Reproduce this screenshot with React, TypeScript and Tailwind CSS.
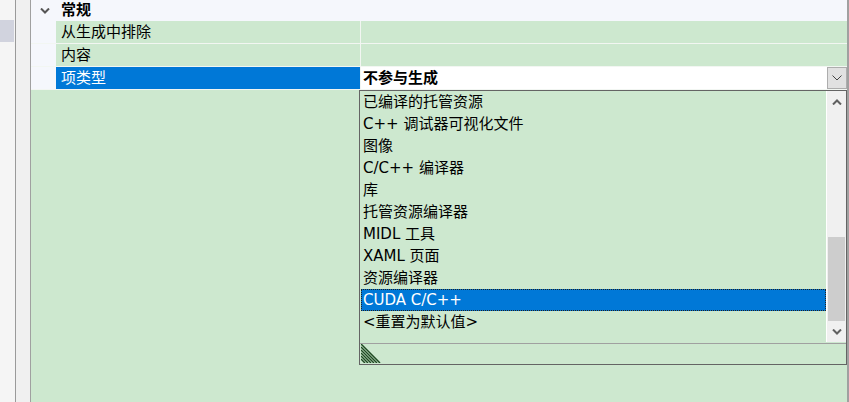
import React from "react";

const font = { fontFamily: '"Microsoft YaHei UI", "DejaVu Sans", "Noto Sans CJK SC", sans-serif' };

const items = [
  "已编译的托管资源",
  "C++ 调试器可视化文件",
  "图像",
  "C/C++ 编译器",
  "库",
  "托管资源编译器",
  "MIDL 工具",
  "XAML 页面",
  "资源编译器",
  "CUDA C/C++",
  "<重置为默认值>",
];

const Chevron = ({ up = false, className = "" }: { up?: boolean; className?: string }) => (
  <svg width="10" height="6" viewBox="0 0 10 6" className={className}>
    <path
      d={up ? "M1 5.5 L5 1.5 L9 5.5" : "M1 0.5 L5 4.5 L9 0.5"}
      fill="none"
      stroke="currentColor"
      strokeWidth="2"
    />
  </svg>
);

const Grip = () => (
  <svg width="20" height="19" viewBox="0 0 20 19">
    {[0, 3, 6, 9, 12, 15].map((k) => (
      <line key={k} x1="0" y1={k} x2={19 - k} y2="19" stroke="#1f4a22" strokeWidth="1.5" />
    ))}
  </svg>
);

const Row = ({ label, selected = false, children }: { label: string; selected?: boolean; children?: React.ReactNode }) => (
  <div className="flex h-[23px] border-b border-[#f2f6f2]">
    <div className="w-[25px] bg-[#f5f7fc]" />
    <div
      className={`w-[304px] pl-[5px] leading-[22px] text-[15px] ${selected ? "bg-[#0078d7] text-white" : "bg-[#cde8cf] text-black"}`}
    >
      {label}
    </div>
    <div className="w-px bg-[#f2f6f2]" />
    <div className="flex-1 bg-[#cde8cf]">{children}</div>
  </div>
);

export default function App() {
  return (
    <div className="flex h-[402px] w-[849px] overflow-hidden bg-white relative" style={font}>
      <div className="w-[15px] bg-[#f5f5f5] flex flex-col">
        <div className="h-[20px]" />
        <div className="h-[22px] w-[14px] bg-[#d1d3de]" />
      </div>
      <div className="w-px bg-[#9a9a9a]" />
      <div className="w-[14px] bg-[#f0f0f0]" />
      <div className="w-px bg-[#a0a0a0]" />
      <div className="flex-1 flex flex-col bg-[#cde8cf]">
        <div className="h-[21px] bg-[#f5f7fc] flex items-center">
          <div className="w-[25px] flex justify-center text-[#555] pl-[2px]">
            <Chevron />
          </div>
          <div className="pl-[5px] text-[15px] font-bold leading-[21px] text-black">常规</div>
        </div>
        <Row label="从生成中排除" />
        <Row label="内容" />
        <Row label="项类型" selected>
          <div className="flex h-full bg-white">
            <div className="flex-1 pl-[2px] text-[15px] font-bold leading-[22px] text-black">不参与生成</div>
            <div className="w-[20px] h-[22px] bg-[#e1e1e1] border border-[#adadad] flex items-center justify-center text-[#444]">
              <svg width="10" height="6" viewBox="0 0 10 6">
                <path d="M0.5 0.5 L5 5 L9.5 0.5" fill="none" stroke="currentColor" strokeWidth="1" />
              </svg>
            </div>
          </div>
        </Row>
        <div className="flex-1" />
      </div>
      <div className="w-[2px] bg-[#a0a0a0]" />

      <div className="absolute left-[359px] top-[90px] w-[488px] h-[275px] border border-[#646464] bg-[#cde8cf] flex flex-col">
        <div className="flex h-[252px]">
          <div className="flex-1 pt-0">
            {items.map((t, i) => (
              <div
                key={t}
                className={`h-[22px] pl-[2px] ml-px text-[15px] leading-[22px] whitespace-pre ${
                  i === 9
                    ? "bg-[#0078d7] text-white outline outline-1 outline-dotted outline-[#222] -outline-offset-1"
                    : "text-black"
                }`}
              >
                {t}
              </div>
            ))}
          </div>
          <div className="w-[20px] h-[251px] border-l border-white bg-[#f0f0f0] flex flex-col text-[#606060]">
            <div className="h-[21px] flex items-center justify-center">
              <Chevron up />
            </div>
            <div className="flex-1 flex flex-col">
              <div className="h-[125px]" />
              <div className="h-[84px] bg-[#cdcdcd] mx-px" />
            </div>
            <div className="h-[21px] flex items-center justify-center">
              <Chevron />
            </div>
          </div>
        </div>
        <div className="h-px bg-[#a0a0a0]" />
        <div className="flex-1 pl-px">
          <Grip />
        </div>
      </div>
    </div>
  );
}
